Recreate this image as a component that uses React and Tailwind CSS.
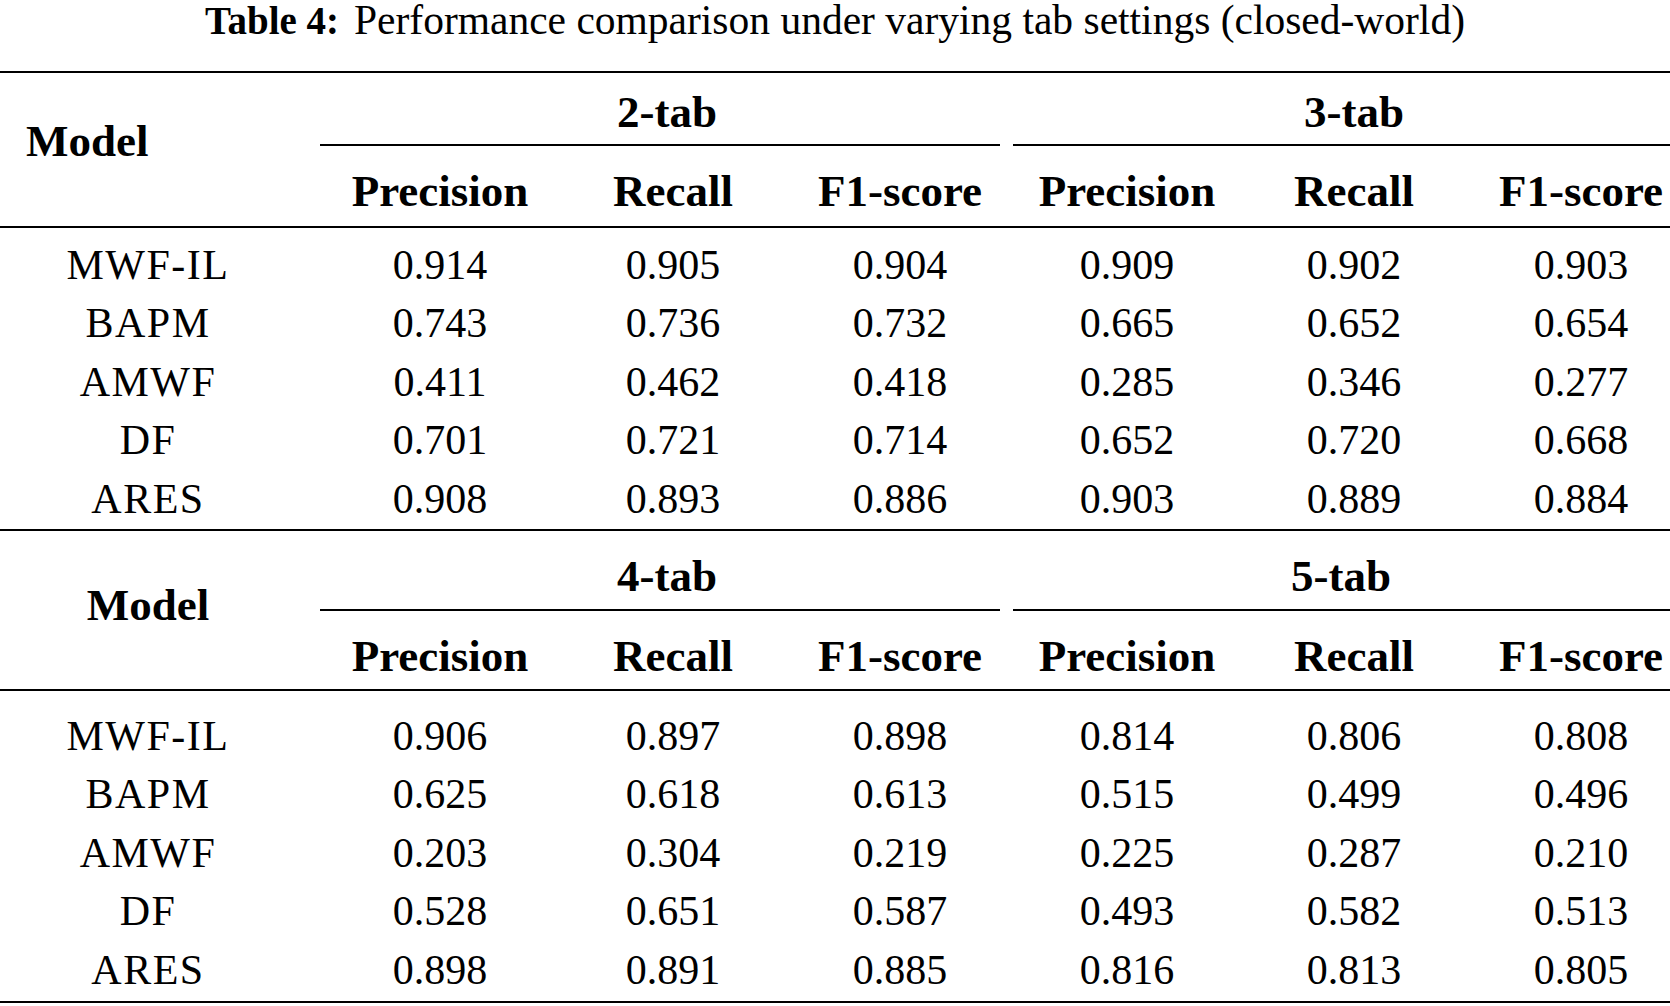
const cols = 'grid grid-cols-[296px_288px_178px_276px_178px_276px_178px]'

const first = [
  ['MWF-IL', '0.914', '0.905', '0.904', '0.909', '0.902', '0.903'],
  ['BAPM', '0.743', '0.736', '0.732', '0.665', '0.652', '0.654'],
  ['AMWF', '0.411', '0.462', '0.418', '0.285', '0.346', '0.277'],
  ['DF', '0.701', '0.721', '0.714', '0.652', '0.720', '0.668'],
  ['ARES', '0.908', '0.893', '0.886', '0.903', '0.889', '0.884'],
]

const second = [
  ['MWF-IL', '0.906', '0.897', '0.898', '0.814', '0.806', '0.808'],
  ['BAPM', '0.625', '0.618', '0.613', '0.515', '0.499', '0.496'],
  ['AMWF', '0.203', '0.304', '0.219', '0.225', '0.287', '0.210'],
  ['DF', '0.528', '0.651', '0.587', '0.493', '0.582', '0.513'],
  ['ARES', '0.898', '0.891', '0.885', '0.816', '0.813', '0.805'],
]

const metrics = ['Precision', 'Recall', 'F1-score', 'Precision', 'Recall', 'F1-score']

function Rule() {
  return <div className="h-[2px] w-full bg-black" />
}

// cmidrules under the tab groups (starts at x=296, inside the right column)
function CMidRule() {
  return (
    <div className="flex h-[2px]">
      <div className="w-[24px]" />
      <div className="w-[680px] bg-black" />
      <div className="w-[13px]" />
      <div className="flex-1 bg-black" />
    </div>
  )
}

function Rows({ rows }) {
  return (
    <div>
      {rows.map((r) => (
        <div key={r[0]} className={cols + ' h-[58.5px] text-center text-[42px] leading-[58.5px]'}>
          {r.map((v, i) => (
            <div key={i} className={i === 0 ? 'tracking-[1.5px]' : ''}>
              {v}
            </div>
          ))}
        </div>
      ))}
    </div>
  )
}

function Metrics() {
  return (
    <div className="grid grid-cols-[288px_178px_276px_178px_276px_178px] pt-[23px]">
      {metrics.map((m, i) => (
        <div key={i} className="text-center">
          {m}
        </div>
      ))}
    </div>
  )
}

export default function App() {
  return (
    <div className="w-[1670px] h-[1006px] bg-white text-black font-['Liberation_Serif',serif]">
      <div className="h-[71px] flex justify-center items-baseline leading-[40px]">
        <span className="font-bold text-[39px]">Table 4:</span>
        <span className="ml-[15px] text-[41.5px]">Performance comparison under varying tab settings (closed-world)</span>
      </div>
      <Rule />

      {/* first block: 2-tab / 3-tab */}
      <div className="flex h-[153px] font-bold text-[45px] leading-none">
        <div className="w-[296px] pl-[26px] pt-[46px]">Model</div>
        <div className="flex-1 flex flex-col">
          <div className="h-[71px] flex pt-[17px]">
            <div className="w-[742px] text-center">2-tab</div>
            <div className="flex-1 text-center">3-tab</div>
          </div>
          <CMidRule />
          <Metrics />
        </div>
      </div>
      <Rule />
      <div className="pt-[7.5px] pb-[1px]">
        <Rows rows={first} />
      </div>
      <Rule />

      {/* second block: 4-tab / 5-tab */}
      <div className="flex h-[158px] font-bold text-[45px] leading-none">
        <div className="w-[296px] text-center pt-[52px]">Model</div>
        <div className="flex-1 flex flex-col">
          <div className="h-[78px] flex pt-[23px]">
            <div className="w-[742px] text-center">4-tab</div>
            <div className="flex-1 text-center pr-[26px]">5-tab</div>
          </div>
          <CMidRule />
          <Metrics />
        </div>
      </div>
      <Rule />
      <div className="pt-[15.5px] pb-[2px]">
        <Rows rows={second} />
      </div>
      <Rule />
    </div>
  )
}
